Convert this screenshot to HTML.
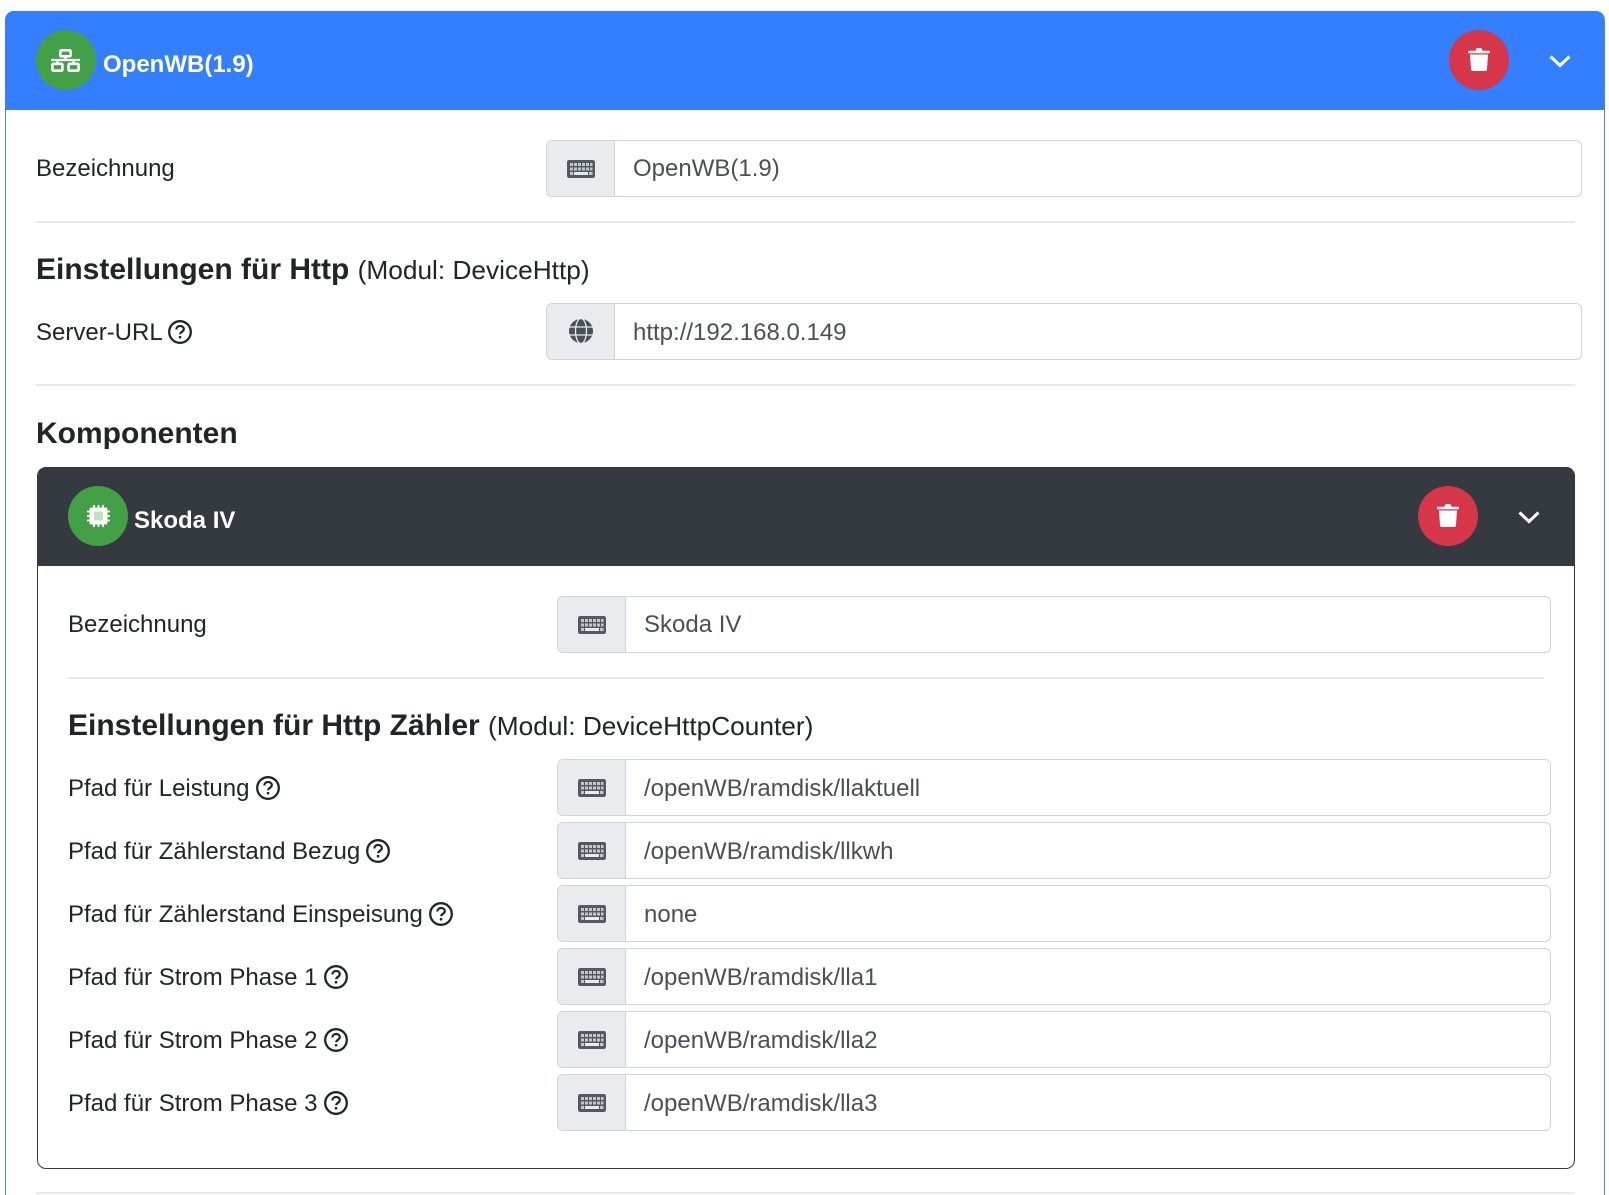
<!DOCTYPE html>
<html lang="de">
<head>
<meta charset="utf-8">
<title>OpenWB</title>
<style>
html,body{margin:0;padding:0;background:#fff;width:1609px;height:1195px;overflow:hidden;}
body{font-family:"Liberation Sans",sans-serif;font-size:24px;color:#212529;}
.wrap{position:relative;width:1609px;height:1195px;overflow:hidden;}
.a{position:absolute;}
.outer{left:5px;top:11px;width:1600px;height:1184px;border:1.5px solid #4d88bd;border-bottom:0;border-radius:9px 9px 0 0;box-sizing:border-box;}
.hd{left:5px;top:11px;width:1599px;height:99px;background:#337fff;border-radius:9px 9px 0 0;}
.hd2{left:37.5px;top:467px;width:1537px;height:99px;background:#343a40;border-radius:9px 9px 0 0;}
.inner{left:36.5px;top:467px;width:1538px;height:702px;border:1.5px solid #343a40;border-radius:9px;box-sizing:border-box;}
.c{width:60px;height:60px;border-radius:50%;}
.g{background:#43a047;}
.r{background:#d5364a;}
.t{font-weight:bold;color:#fff;line-height:36px;white-space:nowrap;}
.l{line-height:36px;white-space:nowrap;left:36px;}
.l2{left:68px;}
.h{font-weight:bold;font-size:30px;line-height:36px;white-space:nowrap;}
.h small{font-weight:normal;font-size:26.25px;}
.hr{height:1.5px;background:#e8e9eb;}
.ig{height:57px;box-sizing:border-box;border:1.5px solid #ced4da;border-radius:6px;background:#fff;overflow:hidden;color:#495057;line-height:54px;white-space:nowrap;}
.ig .p{position:absolute;left:0;top:0;bottom:0;width:66.5px;background:#e9ecef;border-right:1.5px solid #ced4da;box-sizing:content-box;}
.ig .v{position:absolute;left:86px;top:2px;}
.one{left:546px;width:1036px;}
.two{left:557px;width:994px;}
.ig svg{position:absolute;}
</style>
</head>
<body>
<svg width="0" height="0" style="position:absolute">
<defs>
<symbol id="kb" viewBox="0 0 28 18">
<rect width="28" height="18" rx="2.200" fill="#53595f"/>
<g fill="#c3c7cb">
<rect x="3" y="3" width="3" height="3"/><rect x="7" y="3" width="3" height="3"/><rect x="11" y="3" width="3" height="3"/><rect x="15" y="3" width="3" height="3"/><rect x="19" y="3" width="3" height="3"/><rect x="23" y="3" width="2.500" height="3"/>
<rect x="3" y="7.500" width="3" height="3"/><rect x="7" y="7.500" width="3" height="3"/><rect x="11" y="7.500" width="3" height="3"/><rect x="15" y="7.500" width="3" height="3"/><rect x="19" y="7.500" width="3" height="3"/><rect x="23" y="7.500" width="2.500" height="3"/>
<rect x="3" y="12" width="3" height="3"/><rect x="22" y="12" width="3.500" height="3"/>
</g>
<rect x="7" y="12" width="14" height="3" fill="#e9ecef"/>
</symbol>
<symbol id="gl" viewBox="0 0 24 24">
<circle cx="12" cy="12" r="12" fill="#495057"/>
<g fill="none" stroke="#e9ecef" stroke-width="1.300">
<ellipse cx="12" cy="12" rx="5.500" ry="12.500"/>
<path d="M0 8h24M0 16h24"/>
</g>
</symbol>
<symbol id="q" viewBox="0 0 24 24">
<circle cx="12" cy="12" r="10.800" fill="none" stroke="#212529" stroke-width="2.300"/>
<path d="M8.300 9.500c.1-2.200 1.800-3.500 3.800-3.500 2.100 0 3.700 1.300 3.700 3.100 0 2.700-3.600 2.700-3.600 5.200" fill="none" stroke="#212529" stroke-width="2.200"/>
<rect x="10.800" y="16" width="2.500" height="2.500" rx=".5" fill="#212529"/>
</symbol>
<symbol id="tr" viewBox="0 0 22 23">
<path fill="#fff" d="M1 2.700h6.500l.7-1.800C8.500.3 9 0 9.600 0h2.800c.6 0 1.100.3 1.400.9l.7 1.800H21a1 1 0 0 1 1 1v.9a.7.7 0 0 1-.7.7H.7A.7.7 0 0 1 0 4.600v-.9a1 1 0 0 1 1-1zM2 6.500h18l-1 14.500a2 2 0 0 1-2 2H5a2 2 0 0 1-2-2z"/>
</symbol>
<symbol id="ch" viewBox="0 0 24 16">
<path d="M2.500 3.500L12 12.500l9.500-9" fill="none" stroke="#fff" stroke-width="3"/>
</symbol>
<symbol id="nw" viewBox="0 0 29 23">
<g fill="none" stroke="#fff" stroke-width="2.700">
<rect x="9.300" y="1.300" width="10.400" height="6" rx="1.200"/>
<rect x="1.400" y="14.800" width="10" height="6.900" rx="1.200"/>
<rect x="17.600" y="14.800" width="10" height="6.900" rx="1.200"/>
<path d="M0 11h29M14.500 8v3M6.400 11v3.500M22.600 11v3.500" stroke-width="2.200"/>
</g>
</symbol>
<symbol id="cp" viewBox="0 0 23 22">
<rect x="2.500" y="2.500" width="18" height="17" rx="2" fill="#fff"/>
<rect x="7" y="6.500" width="9" height="9" fill="#bfe0c1"/>
<g stroke="#fff" stroke-width="1.800">
<path d="M7 0v3M11.500 0v3M16 0v3M7 19v3M11.500 19v3M16 19v3M0 6.500h3M0 11h3M0 15.500h3M20 6.500h3M20 11h3M20 15.500h3"/>
</g>
</symbol>
</defs>
</svg>
<div class="wrap">
<div class="a outer"></div>
<div class="a hd"></div>
<div class="a c g" style="left:36px;top:30px"></div>
<svg class="a" style="left:51px;top:48.500px" width="29" height="23"><use href="#nw"/></svg>
<div class="a t" style="left:103px;top:47px">OpenWB(1.9)</div>
<div class="a c r" style="left:1449px;top:30px"></div>
<svg class="a" style="left:1468px;top:47.500px" width="22" height="23"><use href="#tr"/></svg>
<svg class="a" style="left:1548px;top:53px" width="24" height="16"><use href="#ch"/></svg>

<div class="a l" style="top:151px">Bezeichnung</div>
<div class="a ig one" style="top:140px"><div class="p"><svg style="left:20px;top:18.500px" width="28" height="18"><use href="#kb"/></svg></div><div class="v" style="top:1px">OpenWB(1.9)</div></div>
<div class="a hr" style="left:36px;top:221px;width:1539px"></div>

<div class="a h" style="left:36px;top:252px">Einstellungen für Http <small>(Modul: DeviceHttp)</small></div>
<div class="a l" style="top:315px">Server-URL</div>
<svg class="a" style="left:168px;top:320px" width="24" height="24"><use href="#q"/></svg>
<div class="a ig one" style="top:303px"><div class="p"><svg style="left:22px;top:15px" width="24" height="24"><use href="#gl"/></svg></div><div class="v">http://192.168.0.149</div></div>
<div class="a hr" style="left:36px;top:384px;width:1539px"></div>

<div class="a h" style="left:36px;top:416px">Komponenten</div>

<div class="a inner"></div>
<div class="a hd2"></div>
<div class="a c g" style="left:68px;top:486px"></div>
<svg class="a" style="left:86.500px;top:505px" width="23" height="22"><use href="#cp"/></svg>
<div class="a t" style="left:134px;top:503px">Skoda IV</div>
<div class="a c r" style="left:1418px;top:486px"></div>
<svg class="a" style="left:1437px;top:503.500px" width="22" height="23"><use href="#tr"/></svg>
<svg class="a" style="left:1517px;top:509px" width="24" height="16"><use href="#ch"/></svg>

<div class="a l l2" style="top:607px">Bezeichnung</div>
<div class="a ig two" style="top:596px"><div class="p"><svg style="left:20px;top:18.500px" width="28" height="18"><use href="#kb"/></svg></div><div class="v" style="top:1px">Skoda IV</div></div>
<div class="a hr" style="left:68px;top:677px;width:1476px"></div>

<div class="a h" style="left:68px;top:708px">Einstellungen für Http Zähler <small>(Modul: DeviceHttpCounter)</small></div>

<div class="a l l2" style="top:771px">Pfad für Leistung</div>
<svg class="a" style="left:256px;top:776px" width="24" height="24"><use href="#q"/></svg>
<div class="a ig two" style="top:759px"><div class="p"><svg style="left:20px;top:18.500px" width="28" height="18"><use href="#kb"/></svg></div><div class="v">/openWB/ramdisk/llaktuell</div></div>

<div class="a l l2" style="top:834px">Pfad für Zählerstand Bezug</div>
<svg class="a" style="left:366px;top:839px" width="24" height="24"><use href="#q"/></svg>
<div class="a ig two" style="top:822px"><div class="p"><svg style="left:20px;top:18.500px" width="28" height="18"><use href="#kb"/></svg></div><div class="v">/openWB/ramdisk/llkwh</div></div>

<div class="a l l2" style="top:897px">Pfad für Zählerstand Einspeisung</div>
<svg class="a" style="left:429px;top:902px" width="24" height="24"><use href="#q"/></svg>
<div class="a ig two" style="top:885px"><div class="p"><svg style="left:20px;top:18.500px" width="28" height="18"><use href="#kb"/></svg></div><div class="v">none</div></div>

<div class="a l l2" style="top:960px">Pfad für Strom Phase 1</div>
<svg class="a" style="left:324px;top:965px" width="24" height="24"><use href="#q"/></svg>
<div class="a ig two" style="top:948px"><div class="p"><svg style="left:20px;top:18.500px" width="28" height="18"><use href="#kb"/></svg></div><div class="v">/openWB/ramdisk/lla1</div></div>

<div class="a l l2" style="top:1023px">Pfad für Strom Phase 2</div>
<svg class="a" style="left:324px;top:1028px" width="24" height="24"><use href="#q"/></svg>
<div class="a ig two" style="top:1011px"><div class="p"><svg style="left:20px;top:18.500px" width="28" height="18"><use href="#kb"/></svg></div><div class="v">/openWB/ramdisk/lla2</div></div>

<div class="a l l2" style="top:1086px">Pfad für Strom Phase 3</div>
<svg class="a" style="left:324px;top:1091px" width="24" height="24"><use href="#q"/></svg>
<div class="a ig two" style="top:1074px"><div class="p"><svg style="left:20px;top:18.500px" width="28" height="18"><use href="#kb"/></svg></div><div class="v">/openWB/ramdisk/lla3</div></div>

<div class="a hr" style="left:36px;top:1192px;width:1539px"></div>
</div>
</body>
</html>
